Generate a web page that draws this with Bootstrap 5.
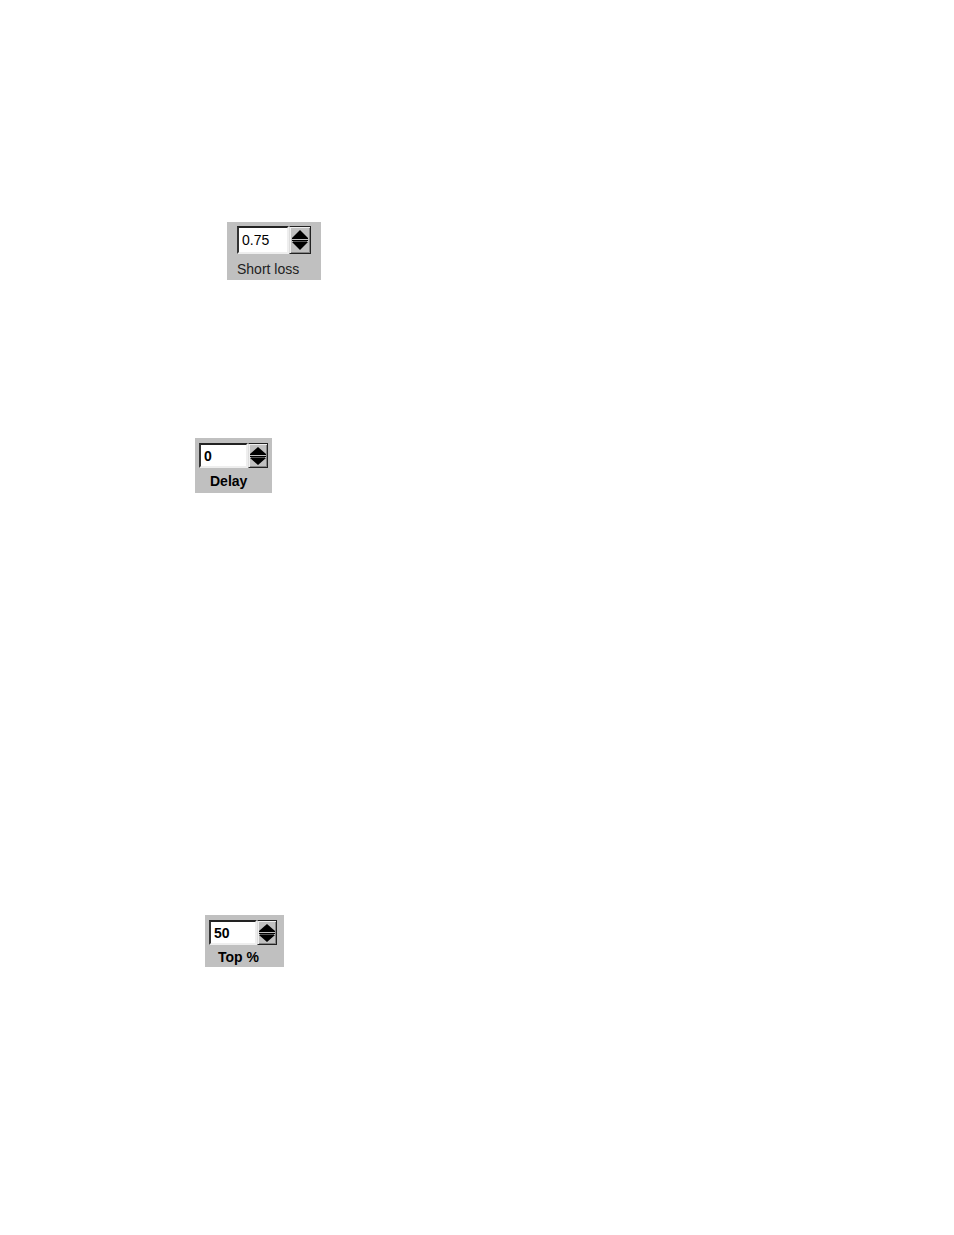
<!DOCTYPE html>
<html lang="en">
<head>
<meta charset="utf-8">
<meta name="viewport" content="width=device-width, initial-scale=1">
<title>Settings</title>
<link href="https://cdn.jsdelivr.net/npm/bootstrap@5.3.0/dist/css/bootstrap.min.css" rel="stylesheet">
<style>
body { background: #fff; color: #000; font-family: "Liberation Sans", Arial, sans-serif; }
.sheet { padding: 222px 24px 268px 195px; }
.panel { background: #c0c0c0; width: 77px; height: 55px; padding: 5px 4px 0; font-size: 14px; font-weight: 700; line-height: 16px; }
.panel-loss { width: 94px; height: 58px; padding: 4px 10px 0; margin: 0 0 158px 32px; font-weight: 400; }
.panel-delay { margin-bottom: 422px; }
.panel-top { width: 79px; height: 52px; padding-right: 7px; margin-left: 10px; }
.spin { height: 25px; }
.panel-loss .spin { height: 28px; }
.field { min-width: 0; flex: 1 1 0; padding: 0 3px; border: 2px solid; border-color: #222 #eee #eee #333; border-radius: 0; background: #fff; color: #000; font: inherit; outline: 0; }
.steps { width: 20px; border: 1px solid #222; border-left-color: #ddd; background: #c0c0c0; box-shadow: inset 1px 1px #eee, inset -1px -1px #858585; padding: 3px 1px 2px; }
.panel-loss .steps { width: 22px; padding: 3px 2px; }
.step { min-height: 0; padding: 0; border: 0; background: none; line-height: 0; }
.step svg { width: 100%; height: 100%; display: block; }
.caption { margin-top: 5px; margin-left: 11px; }
.panel-top .caption { margin-top: 4px; margin-left: 9px; }
.panel-loss .caption { margin-top: 7px; margin-left: 0; color: #222; }
</style>
</head>
<body>
<main class="sheet d-flex flex-column align-items-start">
  <section class="panel panel-loss">
    <div class="spin d-flex">
      <input class="field" id="loss" type="text" inputmode="decimal" value="0.75">
      <div class="steps d-flex flex-column">
        <button class="step flex-fill" type="button" aria-label="Increase short loss"><svg viewBox="0 0 16 10" preserveAspectRatio="none"><path d="M8 0L16 8V9H0V8Z"/></svg></button>
        <button class="step flex-fill" type="button" aria-label="Decrease short loss"><svg viewBox="0 0 16 10" preserveAspectRatio="none"><path d="M0 0H16V1H0ZM0 2H16L8 10Z"/><path fill="#555" d="M1 1H15V2H1Z"/></svg></button>
      </div>
    </div>
    <label class="caption d-block text-nowrap" for="loss">Short loss</label>
  </section>
  <section class="panel panel-delay">
    <div class="spin d-flex">
      <input class="field" id="delay" type="text" inputmode="numeric" value="0">
      <div class="steps d-flex flex-column">
        <button class="step flex-fill" type="button" aria-label="Increase delay"><svg viewBox="0 0 16 9" preserveAspectRatio="none"><path d="M8 0L16 7V8H0V7Z"/></svg></button>
        <button class="step flex-fill" type="button" aria-label="Decrease delay"><svg viewBox="0 0 16 9" preserveAspectRatio="none"><path d="M0 0H16V1H0ZM0 2H16L8 9Z"/><path fill="#555" d="M1 1H15V2H1Z"/></svg></button>
      </div>
    </div>
    <label class="caption d-block text-nowrap" for="delay">Delay</label>
  </section>
  <section class="panel panel-top">
    <div class="spin d-flex">
      <input class="field" id="top-percent" type="text" inputmode="numeric" value="50">
      <div class="steps d-flex flex-column">
        <button class="step flex-fill" type="button" aria-label="Increase top percent"><svg viewBox="0 0 16 9" preserveAspectRatio="none"><path d="M8 0L16 7V8H0V7Z"/></svg></button>
        <button class="step flex-fill" type="button" aria-label="Decrease top percent"><svg viewBox="0 0 16 9" preserveAspectRatio="none"><path d="M0 0H16V1H0ZM0 2H16L8 9Z"/><path fill="#555" d="M1 1H15V2H1Z"/></svg></button>
      </div>
    </div>
    <label class="caption d-block text-nowrap" for="top-percent">Top %</label>
  </section>
</main>
<script src="https://cdn.jsdelivr.net/npm/bootstrap@5.3.0/dist/js/bootstrap.bundle.min.js"></script>
</body>
</html>
